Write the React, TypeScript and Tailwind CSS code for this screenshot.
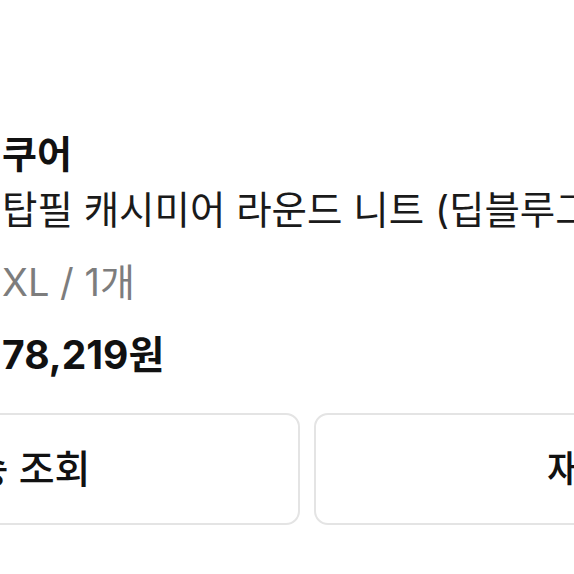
import React from "react";

const font = { fontFamily: 'Inter, "Noto Sans CJK KR", "Noto Sans", sans-serif' };

function OrderItem() {
    return (
        <div className="pl-[2px] pt-[126px] whitespace-nowrap">
            <div className="text-[38px] leading-[56px] font-bold text-[#111]">쿠어</div>
            <div className="text-[38.5px] leading-[56px] text-[#1a1a1a]">탑필 캐시미어 라운드 니트 (딥블루그레이)</div>
            <div className="mt-[16px] text-[38px] leading-[56px] text-[#7d7d7d]">XL / 1개</div>
            <div className="mt-[17px] text-[39px] leading-[56px] font-bold text-[#111]">78,219원</div>
        </div>
    );
}

function ActionButton({ label }: { label: string }) {
    return (
        <button className="w-[573px] h-[112px] shrink-0 rounded-[14px] border-2 border-[#e4e4e4] bg-white text-[39px] font-medium text-[#111] flex items-center justify-center">
            {label}
        </button>
    );
}

export default function App() {
    return (
        <div className="w-[574px] h-[574px] overflow-hidden bg-white" style={font}>
            <OrderItem />
            <div className="mt-[30px] ml-[-273px] flex gap-[14px]">
                <ActionButton label="배송 조회" />
                <ActionButton label="재구매" />
            </div>
        </div>
    );
}
